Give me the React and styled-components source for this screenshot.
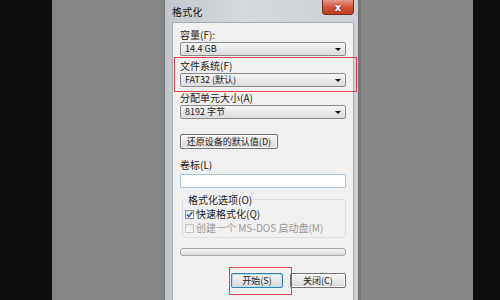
import React from 'react';
import styled, { createGlobalStyle } from 'styled-components';

const GlobalStyle = createGlobalStyle`
  html, body {
    margin: 0;
    padding: 0;
    width: 500px;
    height: 300px;
    overflow: hidden;
    background: #0e0e0e;
  }
  * {
    box-sizing: border-box;
  }
`;

const Stage = styled.div`
  display: flex;
  width: 500px;
  height: 300px;
  padding: 0 27px 0 52px;
  background: #0e0e0e;
  font-family: "Noto Sans CJK SC", "Noto Sans", sans-serif;
  font-size: 10px;
  color: #1b1b1b;
`;

const Backdrop = styled.div`
  flex: 1;
  display: flex;
  padding-left: 112px;
  background: #868686;
  overflow: hidden;
`;

const Window = styled.div`
  position: relative;
  width: 195px;
  height: 320px;
  display: flex;
  flex-direction: column;
  padding: 0 4px 0 7px;
  background: linear-gradient(90deg, #c3c7cb, #d6dadd 40%, #cdd1d5);
  border-left: 1px solid #6c7074;
  border-right: 1px solid #6c7074;
  box-shadow: 2px 0 0 #777;
`;

const TitleBar = styled.div`
  height: 22px;
  display: flex;
  align-items: flex-start;
  justify-content: space-between;
`;

const Title = styled.span`
  margin-top: 4px;
  font-size: 10px;
  color: #111;
  letter-spacing: 0.3px;
`;

const CloseButton = styled.div`
  width: 32px;
  height: 15px;
  display: flex;
  align-items: center;
  justify-content: center;
  background: linear-gradient(#e49a8a, #d2553f 50%, #c03a24);
  border: 1px solid #7d2a1f;
  border-top: none;
  border-radius: 0 0 4px 4px;
  color: #fff;
  font-family: "DejaVu Sans", sans-serif;
  font-weight: bold;
  font-size: 10px;
  text-shadow: 0 0 2px #6a1a10;
`;

const Panel = styled.div`
  flex: 1;
  display: flex;
  flex-direction: column;
  padding: 5px 7px 0 7px;
  background: #f0f0f0;
  border: 1px solid #a8adb2;
  border-bottom: none;
`;

const Label = styled.div`
  height: 13px;
  line-height: 13px;
  margin-top: ${p => p.$top || 0}px;
  white-space: nowrap;
`;

const Select = styled.div`
  height: 14px;
  margin-top: 1px;
  display: flex;
  align-items: center;
  justify-content: space-between;
  padding: 0 4px 0 4px;
  background: linear-gradient(#f6f6f6, #e8e8e8 50%, #dcdcdc);
  border: 1px solid #8a8a8a;
  border-radius: 2px;
  font-size: 9px;
  line-height: 12px;
  white-space: nowrap;
`;

const Arrow = styled.span`
  width: 0;
  height: 0;
  border-left: 3px solid transparent;
  border-right: 3px solid transparent;
  border-top: 3px solid #111;
`;

const Button = styled.div`
  height: 15px;
  width: ${p => p.$width}px;
  margin-top: ${p => p.$top || 0}px;
  display: flex;
  align-items: center;
  justify-content: center;
  background: linear-gradient(#f4f4f4, #e9e9e9 50%, #d8d8d8);
  border: 1px solid ${p => (p.$focus ? '#3c7fb1' : '#707070')};
  border-radius: 2px;
  box-shadow: inset 0 0 0 1px ${p => (p.$focus ? '#b6e0f7' : '#fbfbfb')};
  font-size: 9px;
  line-height: 12px;
  white-space: nowrap;
`;

const TextBox = styled.div`
  height: 14px;
  margin-top: 3px;
  background: #fff;
  border: 1px solid #a9c4d8;
  border-radius: 1px;
`;

const Group = styled.fieldset`
  margin: 5px 0 0 2px;
  padding: 1px 0 2px 2px;
  border: 1px solid #d5dfe5;
  border-radius: 3px;
  min-width: 0;
`;

const Legend = styled.legend`
  padding: 0 1px;
  margin-left: 2px;
  height: 13px;
  line-height: 13px;
  color: #1b1b1b;
`;

const CheckRow = styled.div`
  height: 14px;
  line-height: 14px;
  display: flex;
  align-items: center;
  gap: 2px;
  color: ${p => (p.$disabled ? '#9a9a9a' : '#1b1b1b')};
  white-space: nowrap;
`;

const Box = styled.span`
  width: 9px;
  height: 9px;
  display: flex;
  align-items: center;
  justify-content: center;
  background: linear-gradient(#e6e6e6, #fafafa);
  border: 1px solid ${p => (p.$disabled ? '#c4c4c4' : '#8e8f8f')};
`;

const Progress = styled.div`
  height: 8px;
  margin-top: 10px;
  background: linear-gradient(#f3f3f3, #dcdcdc);
  border: 1px solid #a4a4a4;
  border-radius: 3px;
`;

const Footer = styled.div`
  display: flex;
  justify-content: flex-end;
  gap: 7px;
  margin-top: 17px;
`;

const Highlight = styled.div`
  position: absolute;
  left: ${p => p.$x}px;
  top: ${p => p.$y}px;
  width: ${p => p.$w}px;
  height: ${p => p.$h}px;
  border: 1px solid #d8454c;
  pointer-events: none;
`;

const Check = () => (
  <svg width="7" height="7" viewBox="0 0 7 7">
    <path d="M0.8 3.6 L2.8 5.6 L6.3 0.9" fill="none" stroke="#2c4a9a" strokeWidth="1.4" />
  </svg>
);

export default function App() {
  return (
    <>
      <GlobalStyle />
      <Stage>
        <Backdrop>
          <Window>
            <TitleBar>
              <Title>格式化</Title>
              <CloseButton>x</CloseButton>
            </TitleBar>
            <Panel>
              <Label>容量(F):</Label>
              <Select>14.4 GB<Arrow /></Select>
              <Label $top={3}>文件系统(F)</Label>
              <Select>FAT32 (默认)<Arrow /></Select>
              <Label $top={4}>分配单元大小(A)</Label>
              <Select>8192 字节<Arrow /></Select>
              <Button $width={98} $top={15}>还原设备的默认值(D)</Button>
              <Label $top={9}>卷标(L)</Label>
              <TextBox />
              <Group>
                <Legend>格式化选项(O)</Legend>
                <CheckRow>
                  <Box><Check /></Box>
                  快速格式化(Q)
                </CheckRow>
                <CheckRow $disabled>
                  <Box $disabled />
                  创建一个 MS-DOS 启动盘(M)
                </CheckRow>
              </Group>
              <Progress />
              <Footer>
                <Button $width={52} $focus>开始(S)</Button>
                <Button $width={56}>关闭(C)</Button>
              </Footer>
            </Panel>
            <Highlight $x={9} $y={57} $w={183} $h={35} />
            <Highlight $x={64} $y={267} $w={63} $h={28} />
          </Window>
        </Backdrop>
      </Stage>
    </>
  );
}
